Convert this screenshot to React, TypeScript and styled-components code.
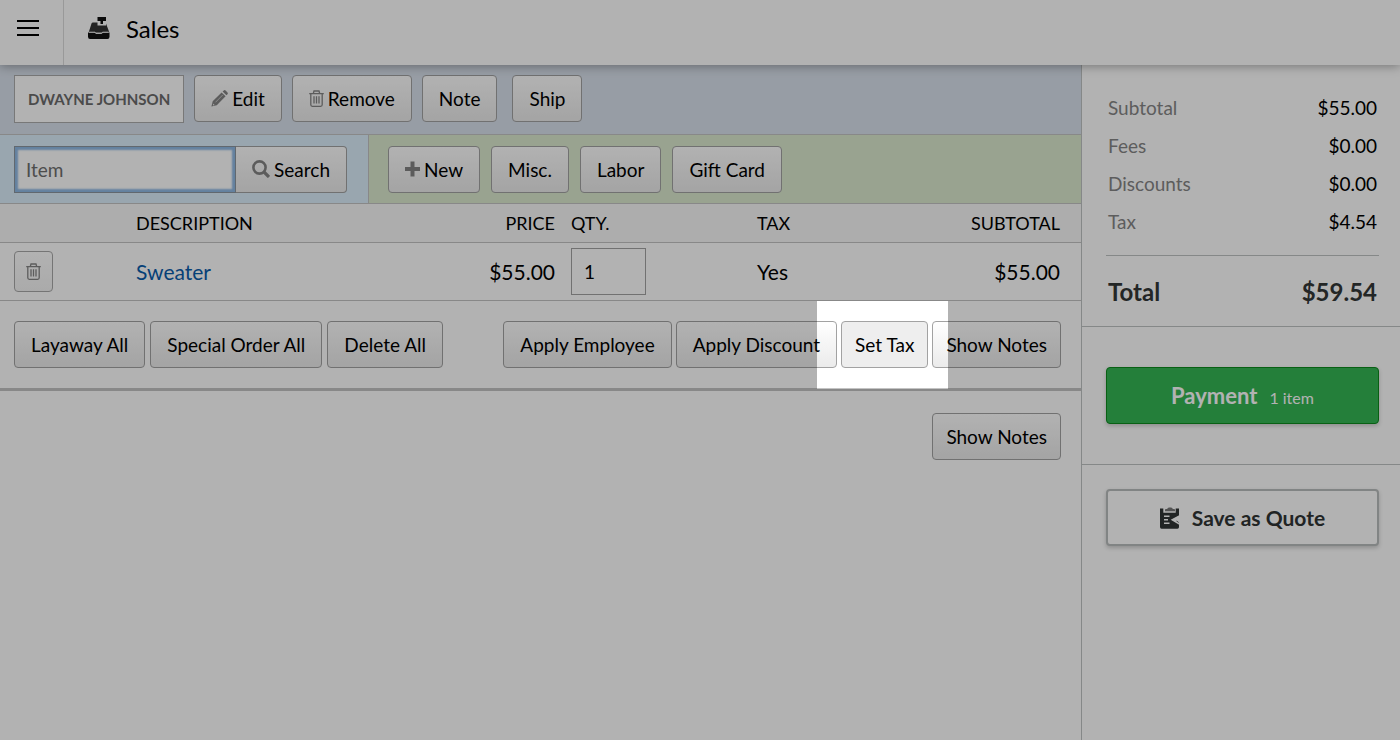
import React from 'react';
import styled, { createGlobalStyle, css } from 'styled-components';

const GlobalStyle = createGlobalStyle`
  *, *::before, *::after { box-sizing: border-box; }
  html, body { margin: 0; min-height: 100%; background: #fff; }
  body, button, input { font-family: Lato, "Liberation Sans", sans-serif; font-size: 19px; color: #000; }
  body { overflow-x: hidden; }
`;

const line = '#c3c3c3';
const panelLine = '#bfc3c3';

const Shell = styled.div`
  display: flex;
  flex-direction: column;
  min-height: 100vh;
  overflow: hidden;
`;

const Header = styled.header`
  display: flex;
  align-items: stretch;
  height: 65px;
  background: #fff;
  box-shadow: 0 1px 10px rgba(0, 0, 0, 0.35);
  position: relative;
  z-index: 1;
`;

const MenuButton = styled.button`
  display: flex;
  align-items: center;
  justify-content: center;
  width: 64px;
  padding: 0 8px 9px 0;
  background: none;
  border: 0;
  border-right: 1px solid #dcdcdc;
`;

const Title = styled.h1`
  display: flex;
  align-items: center;
  gap: 16px;
  margin: 0;
  padding: 0 24px 9px;
  font-size: 24px;
  font-weight: 400;
`;

const Body = styled.div`
  display: flex;
  flex: 1;
`;

const Main = styled.main`
  flex: 1;
  min-width: 0;
`;

const CustomerBar = styled.div`
  display: flex;
  align-items: center;
  gap: 10px;
  height: 70px;
  padding: 0 14px 2px;
  background: #d9e1ec;
  border-bottom: 1px solid ${line};
`;

const CustomerName = styled.a`
  display: flex;
  align-items: center;
  height: 48px;
  padding: 0 13px;
  background: #fff;
  border: 1px solid #adadad;
  color: #6c6c6c;
  font-size: 15px;
  font-weight: 700;
  text-decoration: none;
  text-transform: uppercase;
`;

const Button = styled.button<{ $tight?: boolean; $joined?: boolean; $flat?: boolean }>`
  display: inline-flex;
  align-items: center;
  justify-content: center;
  gap: 4px;
  height: 47px;
  padding: 0 ${p => (p.$tight ? 13 : 16)}px;
  border: 1px solid #a2a2a2;
  border-radius: 4px;
  background: linear-gradient(#fff, #ebebeb);
  white-space: nowrap;
  ${p => p.$joined && css`
    border-left: 0;
    border-radius: 0 4px 4px 0;
  `}
  ${p => p.$flat && css`
    background: #eee;
  `}
`;

const ShipGroup = styled.div`
  padding-left: 5px;
`;

const ItemBar = styled.div`
  display: flex;
  height: 69px;
  border-bottom: 1px solid ${line};
`;

const SearchForm = styled.form`
  display: flex;
  align-items: center;
  width: 369px;
  padding: 0 21px 0 14px;
  background: #dceefb;
  border-right: 1px solid ${line};
`;

const SearchInput = styled.input`
  flex: 1;
  min-width: 0;
  height: 47px;
  padding: 0 11px;
  background: #fff;
  border: 1px solid #8b96a0;
  border-radius: 0;
  outline: 0;
  box-shadow: inset 0 0 2px 3px #8fb9e4;
  &::placeholder { color: #6f6f6f; opacity: 1; }
`;

const NewItems = styled.div`
  display: flex;
  flex: 1;
  align-items: center;
  gap: 11px;
  padding: 0 19px;
  background: #dceacf;
`;

const Lines = styled.table`
  width: 100%;
  table-layout: fixed;
  border-collapse: separate;
  border-spacing: 0;
`;

const Col = styled.col<{ $w?: number }>`
  width: ${p => (p.$w ? `${p.$w}px` : 'auto')};
`;

const cell = css<{ $right?: boolean }>`
  padding: 0 8px;
  border-bottom: 1px solid ${line};
  text-align: ${p => (p.$right ? 'right' : 'left')};
  &:first-child { padding-left: 14px; }
  &:last-child { padding-right: 21px; }
`;

const Th = styled.th<{ $right?: boolean }>`
  ${cell}
  height: 39px;
  background: #f8f8f8;
  font-size: 18px;
  font-weight: 400;
  text-transform: uppercase;
`;

const Td = styled.td<{ $right?: boolean }>`
  ${cell}
  height: 58px;
  font-size: 21px;
`;

const ItemLink = styled.a`
  color: #0a5cab;
  text-decoration: none;
`;

const IconButton = styled.button`
  display: flex;
  align-items: center;
  justify-content: center;
  width: 39px;
  height: 41px;
  padding: 0;
  border: 1px solid #a8a8a8;
  border-radius: 4px;
  background: linear-gradient(#fff, #f4f4f4);
`;

const QtyInput = styled.input`
  display: block;
  width: 75px;
  height: 47px;
  padding: 0 12px;
  border: 1px solid #a2a2a2;
  border-radius: 0;
  background: #fff;
`;

const Actions = styled.div`
  display: flex;
  justify-content: space-between;
  padding: 20px 20px 20px 14px;
  border-bottom: 3px solid ${line};
`;

const ButtonGroup = styled.div<{ $gap: number }>`
  display: flex;
  gap: ${p => p.$gap}px;
`;

const Spotlit = styled.div`
  position: relative;
`;

const Spotlight = styled.div`
  position: absolute;
  z-index: 10;
  inset: -20px -20px -21px -24px;
  box-shadow: 0 0 0 3000px rgba(0, 0, 0, 0.3);
  pointer-events: none;
`;

const NotesRow = styled.div`
  display: flex;
  justify-content: flex-end;
  padding: 22px 20px;
`;

const Aside = styled.aside`
  width: 319px;
  flex: none;
  border-left: 1px solid ${panelLine};
`;

const Section = styled.section<{ $pad: number }>`
  padding: ${p => p.$pad}px 21px ${p => p.$pad}px 24px;
  border-bottom: 1px solid ${panelLine};
  &:last-child { border-bottom: 0; }
`;

const Totals = styled.dl`
  margin: 0;
  padding: 23px 21px 0 24px;
  border-bottom: 1px solid ${panelLine};
`;

const TotalLine = styled.div<{ $grand?: boolean }>`
  display: flex;
  align-items: center;
  justify-content: space-between;
  height: 38px;
  padding: 0 2px;
  dt { color: #868686; }
  dd { margin: 0; }
  ${p => p.$grand && css`
    height: 71px;
    margin-top: 15px;
    border-top: 1px solid ${panelLine};
    font-size: 24px;
    font-weight: 700;
    dt, dd { color: #333737; }
  `}
`;

const BigButton = styled.button<{ $primary?: boolean }>`
  display: flex;
  align-items: center;
  justify-content: center;
  gap: 12px;
  width: 100%;
  height: 57px;
  border: 2px solid #b9bdbd;
  border-radius: 4px;
  background: #fff;
  color: #303434;
  font-size: 21px;
  font-weight: 700;
  box-shadow: 0 2px 4px rgba(0, 0, 0, 0.2);
  ${p => p.$primary && css`
    border: 1px solid #0d8a1e;
    background: #34b654;
    color: #fff;
    font-size: 22px;
  `}
`;

const PaymentLabel = styled.span`
  display: flex;
  align-items: baseline;
  gap: 12px;
`;

const Count = styled.span`
  font-size: 16px;
  font-weight: 400;
`;

const MenuIcon = () => (
  <svg width="22" height="18" viewBox="0 0 22 18" aria-hidden="true">
    <path d="M0 2h22M0 9h22M0 16h22" stroke="#000" strokeWidth="2.2" />
  </svg>
);

const RegisterIcon = () => (
  <svg width="22" height="22" viewBox="0 0 22 22" aria-hidden="true">
    <path d="M9.500 0h8.500v4h-3v3h-2.500V4h-3z" fill="#111" />
    <path d="M5 5.500h4.500v3h8.500V6.500l3.200 8.500H.8L3.500 6.500q.4-1 1.500-1z" fill="#333" />
    <path d="M0 15.500h21.500v4.300q0 2.200-2 2.200H2q-2 0-2-2.200z" fill="#111" />
    <path d="M1 15.200h6l.8 1.300h6l.8-1.300h6" fill="none" stroke="#fff" strokeWidth=".9" />
  </svg>
);

const PencilIcon = () => (
  <svg width="17" height="17" viewBox="0 0 17 17" fill="#858585" aria-hidden="true">
    <path d="M11.600 1.500 12.800.5q.9-.8 1.800.1l1.900 1.900q.8.800 0 1.700L15.400 5.300zM10.600 2.400l4 3.900-8.800 9L.4 16.600 1.700 11.200z" />
    <path d="m4.500 12.300 7.200-7.300" stroke="#d8d8d8" strokeWidth=".8" />
    <path d="m1.900 13.400 1.800 1.700-1.700.4z" fill="#eee" />
  </svg>
);

const TrashIcon = () => (
  <svg width="15" height="17" viewBox="0 0 15 17" fill="none" stroke="#858585" strokeWidth="1.300" aria-hidden="true">
    <path d="M.2 3.600h14.600M4.300 3.500 5 1h5l.7 2.500M1.800 3.800v11q0 1.500 1.500 1.500h8.400q1.500 0 1.500-1.500v-11M5 6.300v7.200M7.500 6.300v7.200M10 6.300v7.200" />
  </svg>
);

const SearchIcon = () => (
  <svg width="18" height="18" viewBox="0 0 18 18" fill="none" stroke="#858585" aria-hidden="true">
    <circle cx="7.500" cy="7.500" r="6.100" strokeWidth="2.600" />
    <path d="m12 12 5 5" strokeWidth="3.200" />
  </svg>
);

const PlusIcon = () => (
  <svg width="15" height="16" viewBox="0 0 15 16" aria-hidden="true">
    <path d="M7.500 .5v15M0 8h15" stroke="#858585" strokeWidth="4" />
  </svg>
);

const QuoteIcon = () => (
  <svg width="20" height="22" viewBox="0 0 20 22" aria-hidden="true">
    <path d="M5 4.200V2.800Q5 2 6 2h1.200Q7.500.4 9 .4h2q1.500 0 1.800 1.600H14q1 0 1 .8v1.400z" fill="#777" />
    <path d="M0 1.500h3.300v4.200h12.400V1.500H19v7.500L12 12.800l4.500 2.600V13.500l2.500 2V20q0 1.800-1.500 1.800h-16Q0 21.800 0 20z" fill="#303434" />
    <path d="M4 9.300h5.500M4 12.800h4M4 16.300h5.500" stroke="#fff" strokeWidth="1.500" />
    <path d="M19.500 8.800 12.200 12.800l7.300 4.200" fill="none" stroke="#fff" strokeWidth="1.500" />
  </svg>
);

const summary = [
  ['Subtotal', '$55.00'],
  ['Fees', '$0.00'],
  ['Discounts', '$0.00'],
  ['Tax', '$4.54'],
];

export default function App() {
  return (
    <Shell>
      <GlobalStyle />
      <Header>
        <MenuButton type="button" aria-label="Menu"><MenuIcon /></MenuButton>
        <Title><RegisterIcon />Sales</Title>
      </Header>
      <Body>
        <Main>
          <CustomerBar>
            <CustomerName href="#customer">Dwayne Johnson</CustomerName>
            <Button type="button"><PencilIcon />Edit</Button>
            <Button type="button"><TrashIcon />Remove</Button>
            <Button type="button">Note</Button>
            <ShipGroup><Button type="button">Ship</Button></ShipGroup>
          </CustomerBar>
          <ItemBar>
            <SearchForm onSubmit={e => e.preventDefault()}>
              <SearchInput type="text" placeholder="Item" aria-label="Item" />
              <Button type="submit" $joined><SearchIcon />Search</Button>
            </SearchForm>
            <NewItems>
              <Button type="button"><PlusIcon />New</Button>
              <Button type="button">Misc.</Button>
              <Button type="button">Labor</Button>
              <Button type="button">Gift Card</Button>
            </NewItems>
          </ItemBar>
          <Lines>
            <colgroup>
              <Col $w={128} /><Col /><Col $w={120} /><Col $w={186} /><Col $w={140} /><Col $w={192} />
            </colgroup>
            <thead>
              <tr>
                <Th aria-label="Delete" />
                <Th>Description</Th>
                <Th $right>Price</Th>
                <Th>Qty.</Th>
                <Th>Tax</Th>
                <Th $right>Subtotal</Th>
              </tr>
            </thead>
            <tbody>
              <tr>
                <Td><IconButton type="button" aria-label="Delete Sweater"><TrashIcon /></IconButton></Td>
                <Td><ItemLink href="#sweater">Sweater</ItemLink></Td>
                <Td $right>$55.00</Td>
                <Td><QtyInput type="text" defaultValue="1" aria-label="Quantity" /></Td>
                <Td>Yes</Td>
                <Td $right>$55.00</Td>
              </tr>
            </tbody>
          </Lines>
          <Actions>
            <ButtonGroup $gap={5}>
              <Button type="button">Layaway All</Button>
              <Button type="button">Special Order All</Button>
              <Button type="button">Delete All</Button>
            </ButtonGroup>
            <ButtonGroup $gap={4}>
              <Button type="button">Apply Employee</Button>
              <Button type="button">Apply Discount</Button>
              <Spotlit>
                <Button type="button" $tight $flat>Set Tax</Button>
                <Spotlight />
              </Spotlit>
              <Button type="button" $tight>Show Notes</Button>
            </ButtonGroup>
          </Actions>
          <NotesRow>
            <Button type="button" $tight>Show Notes</Button>
          </NotesRow>
        </Main>
        <Aside>
          <Totals>
            {summary.map(([label, amount]) => (
              <TotalLine key={label}><dt>{label}</dt><dd>{amount}</dd></TotalLine>
            ))}
            <TotalLine $grand><dt>Total</dt><dd>$59.54</dd></TotalLine>
          </Totals>
          <Section $pad={40}>
            <BigButton type="button" $primary>
              <PaymentLabel>Payment <Count>1 item</Count></PaymentLabel>
            </BigButton>
          </Section>
          <Section $pad={24}>
            <BigButton type="button"><QuoteIcon />Save as Quote</BigButton>
          </Section>
        </Aside>
      </Body>
    </Shell>
  );
}
